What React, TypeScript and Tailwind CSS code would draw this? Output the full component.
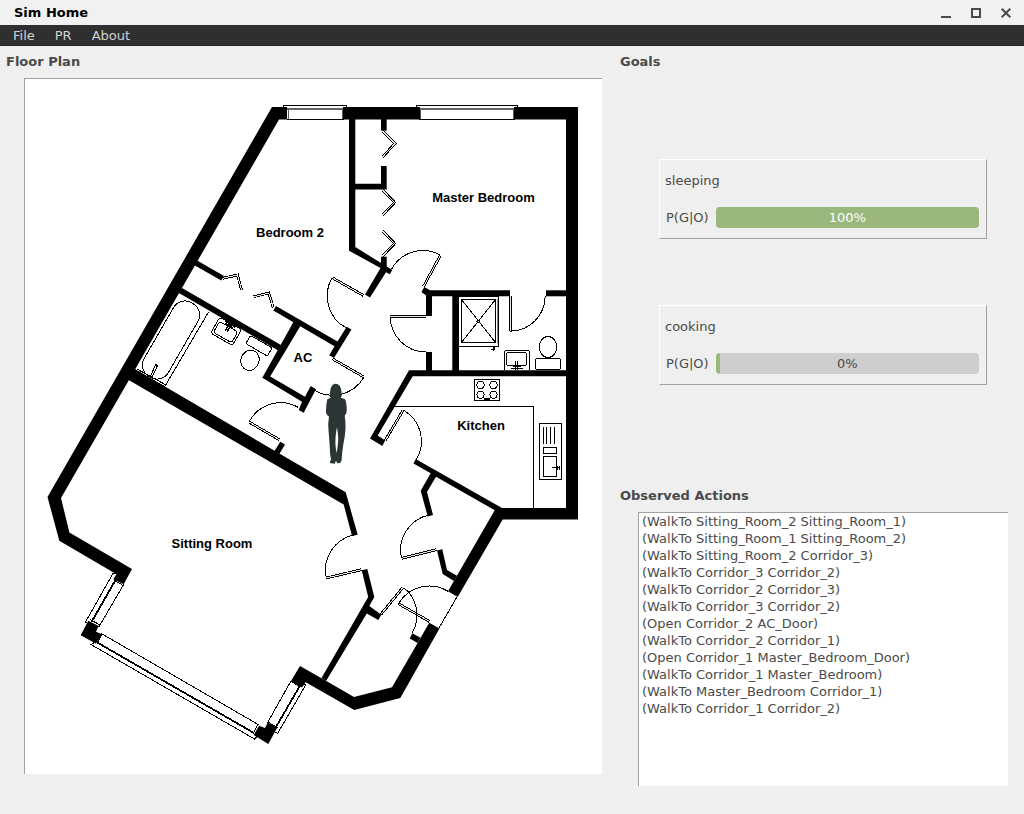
import type { ReactNode } from 'react';

const MENUS = ['File', 'PR', 'About'];

const GOALS = [
  { name: 'sleeping', probability: 100 },
  { name: 'cooking', probability: 0 },
];

const ACTIONS = [
  '(WalkTo Sitting_Room_2 Sitting_Room_1)',
  '(WalkTo Sitting_Room_1 Sitting_Room_2)',
  '(WalkTo Sitting_Room_2 Corridor_3)',
  '(WalkTo Corridor_3 Corridor_2)',
  '(WalkTo Corridor_2 Corridor_3)',
  '(WalkTo Corridor_3 Corridor_2)',
  '(Open Corridor_2 AC_Door)',
  '(WalkTo Corridor_2 Corridor_1)',
  '(Open Corridor_1 Master_Bedroom_Door)',
  '(WalkTo Corridor_1 Master_Bedroom)',
  '(WalkTo Master_Bedroom Corridor_1)',
  '(WalkTo Corridor_1 Corridor_2)',
];

const WALLS = [
  // outer shell
  '287,107 272,107 47.5,497 59.3,540.7 116.5,574.3 113.3,579.3 123.7,584.3 132,569 69.4,532.4 61,498 279,119.5 287,119.5',
  '343,107 420,107 420,119.5 343,119.5',
  '514,107 578,107 578,519.5 502.7,519.5 457.7,597 448,591.3 496,508 566,508 566,119.5 514,119.5',
  '88.3,620.7 98.6,626 96,631.7 101.3,634 96,643.7 80.7,635.3',
  '259,725.7 265,728 267.7,722.5 277.3,727.5 268.3,744 253.7,735',
  '300,666 325,680.3 354,697 392,687.3 429.3,622.7 439.5,628.5 400.3,697.9 354.3,710 305.7,682.3 302,687.5 291,681',
  // bedroom divider and closets
  '349,119 355.3,119 355.3,247 392.3,270 389.7,274.3 386,272.3 370,297.6 365,294.6 380.5,268 349,250.7',
  '381,119 386.7,119 386.7,130.7 381,130.7',
  '355,183.7 381,183.7 381,166 386.7,166 386.7,189.5 355,189.5',
  '381,256.7 386.7,256.7 386.7,270 381,270',
  '196.7,260.3 224,276 221.3,280.5 194,265',
  // bathroom and airing cupboard
  '182,288 283.5,346.5 280,351.5 178,292.6',
  '294,321 301,325 270,376.8 262.3,377.7',
  '266,374 305,396.7 310.7,386 316,389.3 303.7,412.8 298.7,410 302,401.8 262.3,377.7',
  '276,306 337.5,341.5 346.7,326.7 351.5,329.5 334,358 329.3,355.3 334.5,346.2 273.3,310.5',
  '280.3,441.7 285,444.5 279.3,454 274.5,451',
  // master bedroom wall and shower room
  '424.3,287 430,290.3 510,290.3 510,296.3 458,296.3 458,371 452.3,371 452.3,296.3 432,296.3 432,316 426,316 426,295.5 421.5,292',
  '546,290.3 567,290.3 567,296.3 546,296.3',
  '426,352 432,352 432,371 426,371',
  '409,370.3 567,370.3 567,376.2 412.7,376.2 377.7,435.5 385.2,440.5 382.3,446 370,438.5',
  // kitchen, corridor and sitting room
  '415.7,459 502,508 497,511.5 436,476.8 427,491.9 433,515 427.7,516.5 420.7,490.8 430.7,473.3 413.5,463.5',
  '135,369 345.7,492.3 357.7,534.7 352,536 343.7,504.5 126,378.5',
  '361.7,570.3 367.3,569 374.3,597 369.3,606 381.3,614.7 378.3,620 366.8,613.6 326,681 321.5,678 368.2,597',
  '412.3,633.3 420.5,637.8 417.5,643 409.7,638.5',
  '437,550.6 442.3,549.3 447,570 457,575.7 454,581 442.7,574',
];

// Door leaf from tip to hinge, with the swing ending at the opposite jamb.
type Door = { tip: [number, number]; hinge: [number, number]; jamb: [number, number]; sweep: 0 | 1 };

const DOORS: Door[] = [
  { tip: [332.7, 278.2], hinge: [364, 296], jamb: [347, 328.5], sweep: 0 },
  { tip: [441, 255.7], hinge: [424, 287], jamb: [392, 269.7], sweep: 0 },
  { tip: [390.7, 317], hinge: [426.5, 317], jamb: [426.5, 352.5], sweep: 0 },
  { tip: [511, 331.7], hinge: [511, 296.5], jamb: [545.7, 296.5], sweep: 0 },
  { tip: [403.7, 410.5], hinge: [385.7, 441], jamb: [416.7, 460], sweep: 1 },
  { tip: [364.5, 377.5], hinge: [333.3, 359.5], jamb: [313, 389.5], sweep: 1 },
  { tip: [249.5, 422.5], hinge: [280.3, 440.5], jamb: [299, 408], sweep: 1 },
  { tip: [326.7, 578.5], hinge: [362, 570.2], jamb: [354, 535.5], sweep: 1 },
  { tip: [402, 558.9], hinge: [437, 550.2], jamb: [429.3, 515.5], sweep: 1 },
  { tip: [399, 604.2], hinge: [430, 622], jamb: [448.3, 591.7], sweep: 1 },
  { tip: [403.7, 587.7], hinge: [381.3, 615], jamb: [412.7, 633.3], sweep: 1 },
];

const BIFOLDS = [
  '383,131.5 395.5,144 383,157.5',
  '383,190.5 395,203 383,215.5',
  '383,231.5 395,244 383,256.5',
  '223.5,278.7 238,275.5 242,290.5',
  '254,297.3 269.3,293.5 273.7,308',
];

const ROOMS = [
  { name: 'Master Bedroom', x: 483.5, y: 202 },
  { name: 'Bedroom 2', x: 290, y: 237 },
  { name: 'AC', x: 303, y: 362 },
  { name: 'Kitchen', x: 481, y: 430 },
  { name: 'Sitting Room', x: 212, y: 548 },
];

function Leaf({ points }: { points: string }) {
  return (
    <>
      <polyline points={points} stroke="#000" strokeWidth="2.8" />
      <polyline points={points} stroke="#e4e4e4" strokeWidth="1" />
    </>
  );
}

function Doors() {
  return (
    <g fill="none" transform="translate(-.5 -.5)">
      {DOORS.map(({ tip, hinge, jamb, sweep }) => {
        const r = Math.hypot(tip[0] - hinge[0], tip[1] - hinge[1]);
        return (
          <g key={tip.join()}>
            <path d={`M${tip} A${r} ${r} 0 0 ${sweep} ${jamb}`} stroke="#000" />
            <Leaf points={`${tip} ${hinge}`} />
          </g>
        );
      })}
      {BIFOLDS.map((p) => (
        <Leaf key={p} points={p} />
      ))}
      <path d="M457.7 597L439.5 628.5" stroke="#000" />
    </g>
  );
}

function Windows() {
  return (
    <g fill="none" stroke="#000">
      <path d="M283.5 107V105.5H346.5V107M287 119.5H344M416.5 107V105.5H517.5V107M419 119.5H515" />
      <path d="M288.5 108V119M342.5 108V119M420.5 108V119M513.5 108V119" stroke="#555" />
      <path d="M287 109H343M419 109H514" stroke="#666" strokeWidth="2" />
      <path d="M117 574L113.3 573L85.3 622.3L89 624M123.7 584.5L98.8 627M114 580L124 586M90 619.5L100 625" />
      <path d="M115.5 580L91.7 621.7" strokeWidth="1.8" />
      <path d="M94.5 642.5L91 644.5L255 739.3L257.5 735M101.3 633.5L259 725M101.5 634.5L97 643.5M258 724L253 734" />
      <path d="M97.3 642.5L254 733" strokeWidth="1.8" />
      <path d="M291 681L267.5 722.7M303 683.5L305.7 685L277.7 733.3L275 732M291 681.5L301.5 687.5M268 722L278 728" />
      <path d="M299.5 686.5L275.7 727.5" strokeWidth="1.8" />
    </g>
  );
}

function Fixtures() {
  return (
    <g fill="none" stroke="#000">
      {/* bath */}
      <rect x="157" y="297.5" width="28" height="85" rx="13" transform="rotate(30 171 340)" />
      <path d="M208.7 311.7L164.7 386.7M135 370L164.7 386.7M137 369L166 385M150.5 376.5L155.5 364.5L157.5 365.5L152 377.5Z" />
      {/* bathroom basin */}
      <g transform="rotate(30 226 331.5)">
        <rect x="213.5" y="322" width="25" height="18.5" rx="3" />
        <rect x="215.5" y="326" width="21" height="12.5" rx="3" />
        <path d="M220 323H232M221 325H230M225 321V331M227 321V331" strokeWidth="1.6" />
      </g>
      {/* bathroom toilet */}
      <rect x="246.5" y="341" width="25" height="9.5" rx="2" transform="rotate(30 259 345.7)" />
      <ellipse cx="250" cy="360.3" rx="9" ry="10.3" fill="#fff" transform="rotate(20 250 360.3)" />
      {/* shower */}
      <rect x="458.5" y="296.5" width="40" height="50" />
      <rect x="461.5" y="299.5" width="34" height="43" />
      <path d="M461.5 299.5L495.5 342.5M495.5 299.5L461.5 342.5M493.5 346V350.5M494.5 347V350M491 349.5H495M458.5 346V371" />
      <path d="M497.5 299V343" stroke="#888" />
      <circle cx="478.5" cy="321.5" r="1.5" fill="#fff" />
      {/* shower room basin */}
      <path d="M504.5 370V352.5Q504.5 350.5 506.5 350.5H527.5Q529.5 350.5 529.5 352.5V370" />
      <rect x="506.5" y="352.5" width="20" height="13" rx="2" />
      <path d="M511 368.5H523M513 366.5H521M515.5 361V370M517.5 361V370" strokeWidth="1.4" />
      {/* shower room toilet */}
      <ellipse cx="548" cy="347" rx="8.8" ry="10.5" />
      <rect x="535.5" y="358.5" width="25" height="11" rx="2" />
      {/* worktop, hob and sink */}
      <path d="M394 406.5H533.5V508" />
      <rect x="474.5" y="379.5" width="25" height="21" />
      <circle cx="480.5" cy="385" r="3.6" />
      <circle cx="493.5" cy="385" r="3.6" />
      <circle cx="480.5" cy="394.7" r="3.6" />
      <circle cx="493.5" cy="394.7" r="3.6" />
      <path d="M484 399H490" strokeWidth="2" />
      <rect x="539.5" y="423.5" width="22" height="56" />
      <path d="M543.5 427V444M546.5 427V444M550.5 427V444M554.5 427V444" />
      <rect x="543.5" y="447.5" width="13" height="6" />
      <rect x="543.5" y="456.5" width="13" height="20" />
      <path d="M552 467.5H560M557.5 465.5V470M559.5 466V470" />
    </g>
  );
}

function Person() {
  return (
    <g transform="translate(300 370) scale(.33333)">
      <path
        d="M107 41C96 42 92 52 91 62C90 72 87 78 92 83L82 88C79 98 78 115 78 128C79 134 85 137 87 140C86 150 84 160 85 172C86 195 90 225 90 250L93 268L89 279L104 281L108 272L112 280L121 279L125 270C126 250 130 220 134 200C137 180 138 160 134 137C139 132 141 128 140 112C139 98 138 92 134 87L122 83C127 78 125 70 124 62C122 48 117 42 107 41Z"
        fill="#2d3436"
      />
      <path d="M111 172C107 190 105 215 107 232L110 250L113 228C116 212 115 195 111 172Z" fill="#fff" />
    </g>
  );
}

function FloorPlan() {
  return (
    <svg viewBox="25 79 577 695" className="block h-auto w-full" role="img" aria-label="Floor plan">
      <g shapeRendering="crispEdges">
        <Windows />
        <Fixtures />
        <Doors />
      </g>
      <g fill="#000">
        {WALLS.map((points) => (
          <polygon key={points} points={points} />
        ))}
      </g>
      <Person />
      <g textAnchor="middle" className="fill-black font-['Liberation_Sans',Arial,sans-serif] text-[13px] font-bold">
        {ROOMS.map(({ name, x, y }) => (
          <text key={name} x={x} y={y}>
            {name}
          </text>
        ))}
      </g>
    </svg>
  );
}

function WindowButton({ label, children }: { label: string; children: ReactNode }) {
  return (
    <button type="button" aria-label={label} className="flex h-6 w-[30px] items-center justify-center">
      <svg width="10" height="10" viewBox="0 0 10 10" fill="none" stroke="#4a4a4a" strokeWidth="2">
        {children}
      </svg>
    </button>
  );
}

function Heading({ children }: { children: ReactNode }) {
  return <h2 className="text-[13px] leading-5 font-bold">{children}</h2>;
}

function Goal({ name, probability }: { name: string; probability: number }) {
  return (
    <div className="border border-t-white border-r-[#a0a0a0] border-b-[#a0a0a0] border-l-white pt-[11px] pr-[7px] pb-2.5 pl-[5px]">
      <h3 className="leading-5">{name}</h3>
      <div className="mt-4 flex items-center gap-[7px] pl-px">
        <span id={`${name}-label`}>P(G|O)</span>
        <div
          role="progressbar"
          aria-labelledby={`${name}-label`}
          aria-valuenow={probability}
          aria-valuemin={0}
          aria-valuemax={100}
          className="grid h-[21px] flex-1 overflow-hidden rounded bg-[#cecece]"
        >
          <div
            className="col-start-1 row-start-1 min-w-1 rounded-[3px] bg-[#9ab87c]"
            style={{ width: `${probability}%` }}
          />
          <span
            className={
              probability > 50
                ? 'col-start-1 row-start-1 text-center leading-[21px] text-white'
                : 'col-start-1 row-start-1 text-center leading-[21px]'
            }
          >
            {probability}%
          </span>
        </div>
      </div>
    </div>
  );
}

export default function App() {
  return (
    <div className="flex min-h-screen flex-col bg-[#efefef] font-['DejaVu_Sans',sans-serif] text-[13px] text-[#4a4a4a]">
      <header className="flex h-[25px] items-center justify-between bg-[#f1f1f1] pr-[3px] pl-3.5">
        <h1 className="font-bold text-black">Sim Home</h1>
        <div className="flex">
          <WindowButton label="Minimize">
            <path d="M0 9H10" />
          </WindowButton>
          <WindowButton label="Maximize">
            <rect x="1" y="1" width="8" height="8" />
          </WindowButton>
          <WindowButton label="Close">
            <path d="M.7 .7L9.3 9.3M9.3 .7L.7 9.3" />
          </WindowButton>
        </div>
      </header>
      <nav className="flex h-[21px] items-center border-b border-[#262626] bg-[#2f2f2f] pl-[3px] text-[#d3d3d3]">
        {MENUS.map((menu) => (
          <button key={menu} type="button" className="px-2.5 pt-px leading-5">
            {menu}
          </button>
        ))}
      </nav>
      <main className="grid flex-1 grid-cols-[596fr_388fr] gap-x-[18px] pt-1.5 pr-4 pb-7 pl-1.5">
        <section className="min-w-0">
          <Heading>Floor Plan</Heading>
          <div className="mt-1.5 ml-[18px] border-t border-l border-[#a0a0a0] bg-white">
            <FloorPlan />
          </div>
        </section>
        <section className="flex min-w-0 flex-col">
          <Heading>Goals</Heading>
          <div className="flex flex-col gap-[66px] pt-[87px] pr-[21px] pb-[101px] pl-[39px]">
            {GOALS.map((goal) => (
              <Goal key={goal.name} {...goal} />
            ))}
          </div>
          <Heading>Observed Actions</Heading>
          <ul className="mt-1.5 ml-[18px] flex-1 border-t border-l border-[#a0a0a0] bg-white pl-[3px] leading-[17px]">
            {ACTIONS.map((action, i) => (
              <li key={i}>{action}</li>
            ))}
          </ul>
        </section>
      </main>
    </div>
  );
}
